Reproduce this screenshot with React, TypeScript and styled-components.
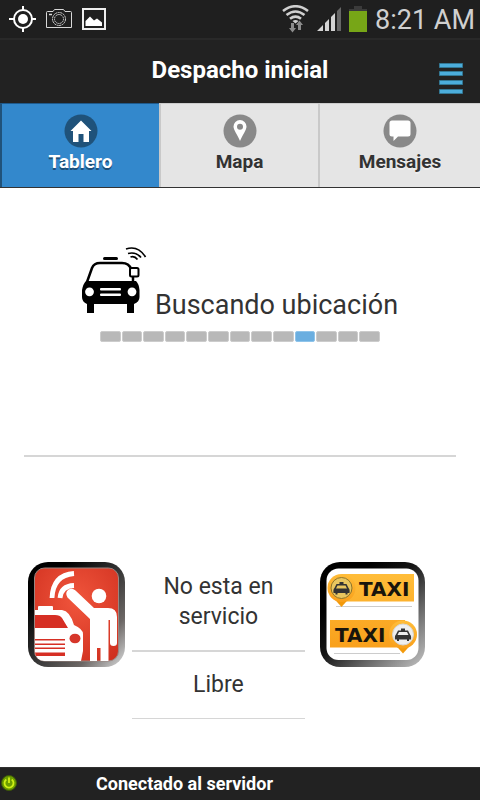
import React from "react";
import styled, { createGlobalStyle } from "styled-components";

const GlobalStyle = createGlobalStyle`
  *, *::before, *::after { box-sizing: border-box; }
  body { margin: 0; background: #fff; color: #333; font-family: Roboto, "Noto Sans", sans-serif; }
`;

const Page = styled.div`
  min-height: 100vh;
  display: flex;
  flex-direction: column;
`;

const StatusBar = styled.div`
  height: 40px;
  padding: 0 5px 0 8px;
  display: flex;
  align-items: center;
  justify-content: space-between;
  background: #1f1f1f;
  border-bottom: 2px solid #292929;
  color: #d0d0d0;
`;

const StatusGroup = styled.div<{ $gap: number }>`
  display: flex;
  align-items: center;
  gap: ${(p) => p.$gap}px;

  svg { display: block; }
`;

const Clock = styled.time`
  padding-top: 2px;
  font-size: 27px;
  line-height: 36px;
  white-space: nowrap;
`;

const Header = styled.header`
  height: 63px;
  display: grid;
  grid-template-columns: 60px 1fr 60px;
  align-items: center;
  background: #222;
`;

const Title = styled.h1`
  grid-column: 2;
  margin: 0;
  padding-bottom: 4px;
  color: #fff;
  font-size: 24px;
  line-height: 28px;
  font-weight: 700;
  text-align: center;
`;

const MenuButton = styled.button`
  justify-self: end;
  align-self: end;
  margin: 0 17px 9px 0;
  padding: 0;
  border: 0;
  background: none;

  svg { display: block; }
`;

const Tabs = styled.nav`
  display: grid;
  grid-template-columns: 159fr 159fr 162fr;
  border-bottom: 1px solid #333;
`;

const Tab = styled.a<{ $active?: boolean }>`
  height: 84px;
  padding: 10px 0 0;
  display: flex;
  flex-direction: column;
  align-items: center;
  gap: 1px;
  border-top: 1px solid ${(p) => (p.$active ? "#1f5a8c" : "#ccc")};
  border-left: 2px solid ${(p) => (p.$active ? "#20527a" : "#c9c9c9")};
  background: ${(p) => (p.$active ? "#3388cc" : "#e5e5e5")};
  color: ${(p) => (p.$active ? "#fff" : "#333")};
  text-shadow: ${(p) => (p.$active ? "0 2px 0 #1d4f78" : "0 2px 0 #eee")};
  font-size: 19px;
  line-height: 26px;
  font-weight: 700;
  text-decoration: none;

  svg { display: block; }
`;

const Main = styled.main`
  flex: 1;
  padding: 59px 24px 40px;
`;

const Search = styled.section`
  display: flex;
  flex-direction: column;
  align-items: center;
`;

const SearchLine = styled.div`
  height: 72px;
  display: flex;
  align-items: baseline;
  gap: 8px;
`;

const SearchText = styled.span`
  font-size: 27px;
  line-height: 30px;
`;

const Progress = styled.div`
  margin: 12px 0 0;
  display: grid;
  grid-template-columns: repeat(13, 1fr);
  gap: 1px;
  width: 280px;
`;

const Segment = styled.span<{ $on: boolean }>`
  height: 11px;
  border-radius: 2px;
  border: 1px solid ${(p) => (p.$on ? "#8fc4ea" : "#ccc")};
  background: ${(p) => (p.$on ? "#6aaee0" : "#b8b8b8")};
`;

const Divider = styled.hr`
  margin: 113px 0 105px;
  border: 0;
  border-top: 2px solid #d6d6d6;
`;

const Panel = styled.section`
  display: grid;
  grid-template-columns: 25fr 40fr 35fr;
`;

const PictureButton = styled.button<{ $indent: number }>`
  align-self: start;
  justify-self: start;
  margin: 0 0 0 ${(p) => p.$indent}px;
  padding: 0;
  border: 0;
  background: none;

  svg { display: block; }
`;

const States = styled.div`
  text-align: center;
  font-size: 23px;
  line-height: 30px;
`;

const State = styled.p<{ $line: number }>`
  margin: 0;
  padding: ${(p) => (p.$line === 2 ? "10px 24px 18px" : "18px 24px")};
  border-bottom: ${(p) => p.$line}px solid #d6d6d6;
`;

const Footer = styled.footer`
  height: 33px;
  display: grid;
  grid-template-columns: 1fr 4fr;
  align-items: center;
  background: #222;
  border-top: 1px solid #303030;
  color: #fff;
  font-size: 18px;
  line-height: 24px;
  font-weight: 700;

  svg { display: block; margin-bottom: 3px; }
`;

const GpsIcon = () => (
  <svg width="28" height="28" viewBox="0 0 28 28" fill="none" stroke="#fff" strokeWidth="2">
    <circle cx="15" cy="14" r="9" />
    <path d="M15 1v5M15 22v5M1 14h5M24 14h4" />
    <circle cx="15" cy="14" r="5" fill="#fff" stroke="none" />
  </svg>
);

const CameraIcon = () => (
  <svg width="26" height="20" viewBox="0 0 26 20" fill="none" stroke="#d8d8d8">
    <path d="M.5 3.500q0-1 1-1H7L8.500.5h9l1.500 2h5.500q1 0 1 1v15h-25z" />
    <circle cx="13" cy="10" r="6.500" strokeDasharray="2 .6" />
    <circle cx="13" cy="10" r="4.500" strokeDasharray="1.500 .6" />
    <path d="M3 5.500h3" strokeWidth="1.500" />
  </svg>
);

const PhotoIcon = () => (
  <svg width="24" height="22" viewBox="0 0 24 22">
    <rect x="1" y="1" width="22" height="20" fill="none" stroke="#eee" strokeWidth="2" />
    <path d="M3.500 18v-5l4.500-4.500 4 4 3-2 5 4V18z" fill="#fff" />
  </svg>
);

const WifiIcon = () => (
  <svg width="27" height="28" viewBox="0 0 27 28" fill="none" stroke="#d0d0d0" strokeWidth="2.600">
    <path d="M1 6Q13.500-3.500 26 6M4.500 10q9-7 18 0M8 13.800q5.500-4.300 11 0" />
    <path d="M10.500 16q3-2 6 0L13.500 18.500z" fill="#d0d0d0" stroke="none" />
    <path d="M9 18h3v5h2l-3.500 4.500L7 23h2zM16 25v-5h-2l3.500-4.500L21 20h-2v5z" fill="#8b8b8b" stroke="none" />
  </svg>
);

const SignalIcon = () => (
  <svg width="24" height="24" viewBox="0 0 24 24" fill="#d3d3d3">
    <path d="M0 24l6-6v6zM8 24v-8l4-4v12zM14 24V10l4-4v18z" />
    <path d="M20 24V4l4-4v24z" fill="#666" />
  </svg>
);

const BatteryIcon = () => (
  <svg width="18" height="26" viewBox="0 0 18 26">
    <path d="M5 0h8v3h5v3H0V3h5z" fill="#3b3b3b" />
    <path d="M0 5h18v21H0z" fill="#77a617" />
  </svg>
);

const MenuIcon = () => (
  <svg width="24" height="32" viewBox="0 0 24 32" fill="#4caddb" stroke="#337895">
    <path d="M.5 1.500h23v4H.5zM.5 9.500h23v4H.5zM.5 18.500h23v4H.5zM.5 27.500h23v4H.5z" />
  </svg>
);

const TabIcon = ({ active, path }: { active?: boolean; path: string }) => (
  <svg width="34" height="34" viewBox="0 0 34 34">
    <circle cx="17" cy="17" r="16.500" fill={active ? "#1f527a" : "#898989"} />
    <path d={path} fill="#fff" fillRule="evenodd" />
  </svg>
);

const tabs = [
  { label: "Tablero", active: true, path: "M17 6.500L27.500 17H25v11h-5.500v-8h-5v8H9V17H6.500z" },
  { label: "Mapa", path: "M17 6a6.500 6.500 0 0 1 6.500 6.500C23.500 16 20 20 17 27c-3-7-6.500-11-6.500-14.500A6.500 6.500 0 0 1 17 6zm0 3.700a3 3 0 1 0 0 6 3 3 0 0 0 0-6z" },
  { label: "Mensajes", path: "M9 6.500h16q2.500 0 2.500 2.500v11q0 2.500-2.500 2.500H15L10.500 27v-4.500H9q-2.500 0-2.500-2.500V9q0-2.500 2.500-2.500z" },
];

const SearchingCar = () => (
  <svg width="65" height="67" viewBox="0 0 65 67">
    <rect x="21" y="10" width="15" height="3" rx="1.500" />
    <path d="M5 35L10 21q2-5 8-5h22q7 0 9 6" fill="none" stroke="#000" strokeWidth="2.500" />
    <path d="M4 34h50q3 3 3.500 9v7q0 5-5.500 7v9h-7v-9H12v9H5v-9q-5-2-5-7v-7q1-6 4-9z" />
    <path d="M51 30v6" stroke="#000" strokeWidth="2.500" />
    <rect x="48" y="21" width="8.500" height="8.500" rx="1.500" fill="#fff" stroke="#000" strokeWidth="2" />
    <g fill="#fff">
      <circle cx="7.500" cy="44.800" r="4.400" />
      <circle cx="50" cy="44.800" r="4.400" />
      <rect x="18" y="41" width="21" height="2.500" rx="1" />
      <rect x="18" y="46.500" width="21" height="2.500" rx="1" />
    </g>
    <path d="M44 2Q56-2 63.500 10M46 6.500q8-2 13 4M48.500 10q4-1.500 7 2.500" fill="none" stroke="#000" strokeWidth="1.700" />
  </svg>
);

const HailPicture = () => (
  <svg width="97" height="105" viewBox="0 0 97 105">
    <defs>
      <linearGradient id="hail-frame" x1=".25" y1=".15" x2="1" y2=".9">
        <stop offset="0" stopColor="#000" />
        <stop offset=".4" stopColor="#333" />
        <stop offset=".75" stopColor="#6c6765" />
        <stop offset="1" stopColor="#c4c4c4" />
      </linearGradient>
      <radialGradient id="hail-red" cx=".5" cy=".35" r=".75">
        <stop offset="0" stopColor="#f0553c" />
        <stop offset="1" stopColor="#d0301f" />
      </radialGradient>
      <clipPath id="hail-clip"><rect x="7" y="6.500" width="83" height="92.500" rx="9" /></clipPath>
    </defs>
    <rect width="97" height="105" rx="20" fill="url(#hail-frame)" />
    <rect x="6.500" y="6" width="84" height="93" rx="10" fill="url(#hail-red)" stroke="#9b8580" />
    <g clipPath="url(#hail-clip)" fill="#fff">
      <path d="M5 48h5v-3q0-1 1-1h13q1 0 1 1v3h9q8 1 12 15 9 4 9 9v17l-2 10h-6V88H38v11H5z" />
      <circle cx="71" cy="34" r="7.300" />
      <path d="M39.500 35.500q-3-5 1-8 4-2 7 1L66 46h14q9 0 9 9v26q0 3-3.500 3T82 81V58h-1.500v41h-8V86H69v13h-7V57z" />
      <path d="M38 88h9v11h-9z" />
      <path d="M5 53h22q5 0 7 3l6 10H5zM5 77h32v1.500H5zM5 81.500h32v1.500H5zM5 85.500h32V87H5zM5 90.500h32V94H5z" fill="#d62f24" />
      <ellipse cx="47" cy="76.500" rx="5.500" ry="4.800" fill="#d6362a" />
      <path d="M24 36Q25 13 46 11.500M32 36q1-12 14-12.500" fill="none" stroke="#fff" strokeWidth="4.800" />
    </g>
  </svg>
);

const PinCar = ({ x, y, gold }: { x: number; y: number; gold: boolean }) => (
  <g transform={`translate(${x} ${y})`}>
    <path d="M-8 10L0 19L8 10z" fill="#f39a0b" />
    <circle r="14" fill="url(#sign)" />
    <circle r="10.500" fill={gold ? "#e9c65f" : "#eee"} stroke={gold ? "#8c742b" : "#d6d6d6"} />
    <path d="M-2-6h4v2h3l2 4q1.500 1 1 5H6v1.500H4V5h-8v1.500h-2V5h-2q-.5-4 1-5l2-4h3zM-4-2.500L-5.500.5h11L4-2.500z" fill="#333" fillRule="evenodd" />
  </g>
);

const SignsPicture = () => (
  <svg width="105" height="105" viewBox="0 0 105 105">
    <defs>
      <linearGradient id="sign-frame" x1=".3" y1=".2" x2="1" y2=".9">
        <stop offset="0" stopColor="#000" />
        <stop offset=".3" stopColor="#151515" />
        <stop offset=".65" stopColor="#686868" />
        <stop offset="1" stopColor="#b4b4b4" />
      </linearGradient>
      <linearGradient id="sign" x1="0" y1="0" x2="0" y2="1">
        <stop offset="0" stopColor="#ffbd39" />
        <stop offset="1" stopColor="#f9a01b" />
      </linearGradient>
    </defs>
    <rect width="105" height="105" rx="20" fill="url(#sign-frame)" />
    <rect x="6.500" y="6.500" width="92" height="91.500" rx="12" fill="#fff" />
    <path d="M22 12h72v27.500H22zM10 58h75v27.500H10z" fill="url(#sign)" />
    <path d="M16 44.500h76M14 91.500h66" stroke="#ccc" />
    <PinCar x={21.500} y={26} gold />
    <PinCar x={83} y={72.500} gold={false} />
    <g fill="#19150c" fontFamily='"DejaVu Sans", sans-serif' fontWeight="700" fontSize="20">
      <text x="39" y="34">TAXI</text>
      <text x="15" y="80">TAXI</text>
    </g>
  </svg>
);

const PowerIcon = () => (
  <svg width="18" height="18" viewBox="0 0 18 18" fill="none">
    <circle cx="9" cy="9" r="7.500" fill="#6c9d00" stroke="#3d5908" />
    <path d="M6.300 5.500a4.500 4.500 0 1 0 5.400 0M9 3.500V9" stroke="#d0f014" strokeWidth="1.800" />
  </svg>
);

export default function App() {
  return (
    <Page>
      <GlobalStyle />
      <StatusBar>
        <StatusGroup $gap={10}>
          <GpsIcon />
          <CameraIcon />
          <PhotoIcon />
        </StatusGroup>
        <StatusGroup $gap={8}>
          <WifiIcon />
          <SignalIcon />
          <BatteryIcon />
          <Clock>8:21 AM</Clock>
        </StatusGroup>
      </StatusBar>
      <Header>
        <Title>Despacho inicial</Title>
        <MenuButton aria-label="Menú"><MenuIcon /></MenuButton>
      </Header>
      <Tabs>
        {tabs.map((t) => (
          <Tab key={t.label} href="#" $active={t.active}>
            <TabIcon active={t.active} path={t.path} />
            {t.label}
          </Tab>
        ))}
      </Tabs>
      <Main>
        <Search>
          <SearchLine>
            <SearchingCar />
            <SearchText>Buscando ubicación</SearchText>
          </SearchLine>
          <Progress role="progressbar" aria-label="Buscando ubicación">
            {Array.from({ length: 13 }, (_, i) => (
              <Segment key={i} $on={i === 9} />
            ))}
          </Progress>
        </Search>
        <Divider />
        <Panel>
          <PictureButton $indent={4} aria-label="Servicio"><HailPicture /></PictureButton>
          <States>
            <State $line={2}>No esta en servicio</State>
            <State $line={1}>Libre</State>
          </States>
          <PictureButton $indent={15} aria-label="Taxi"><SignsPicture /></PictureButton>
        </Panel>
      </Main>
      <Footer>
        <PowerIcon />
        <span>Conectado al servidor</span>
      </Footer>
    </Page>
  );
}
